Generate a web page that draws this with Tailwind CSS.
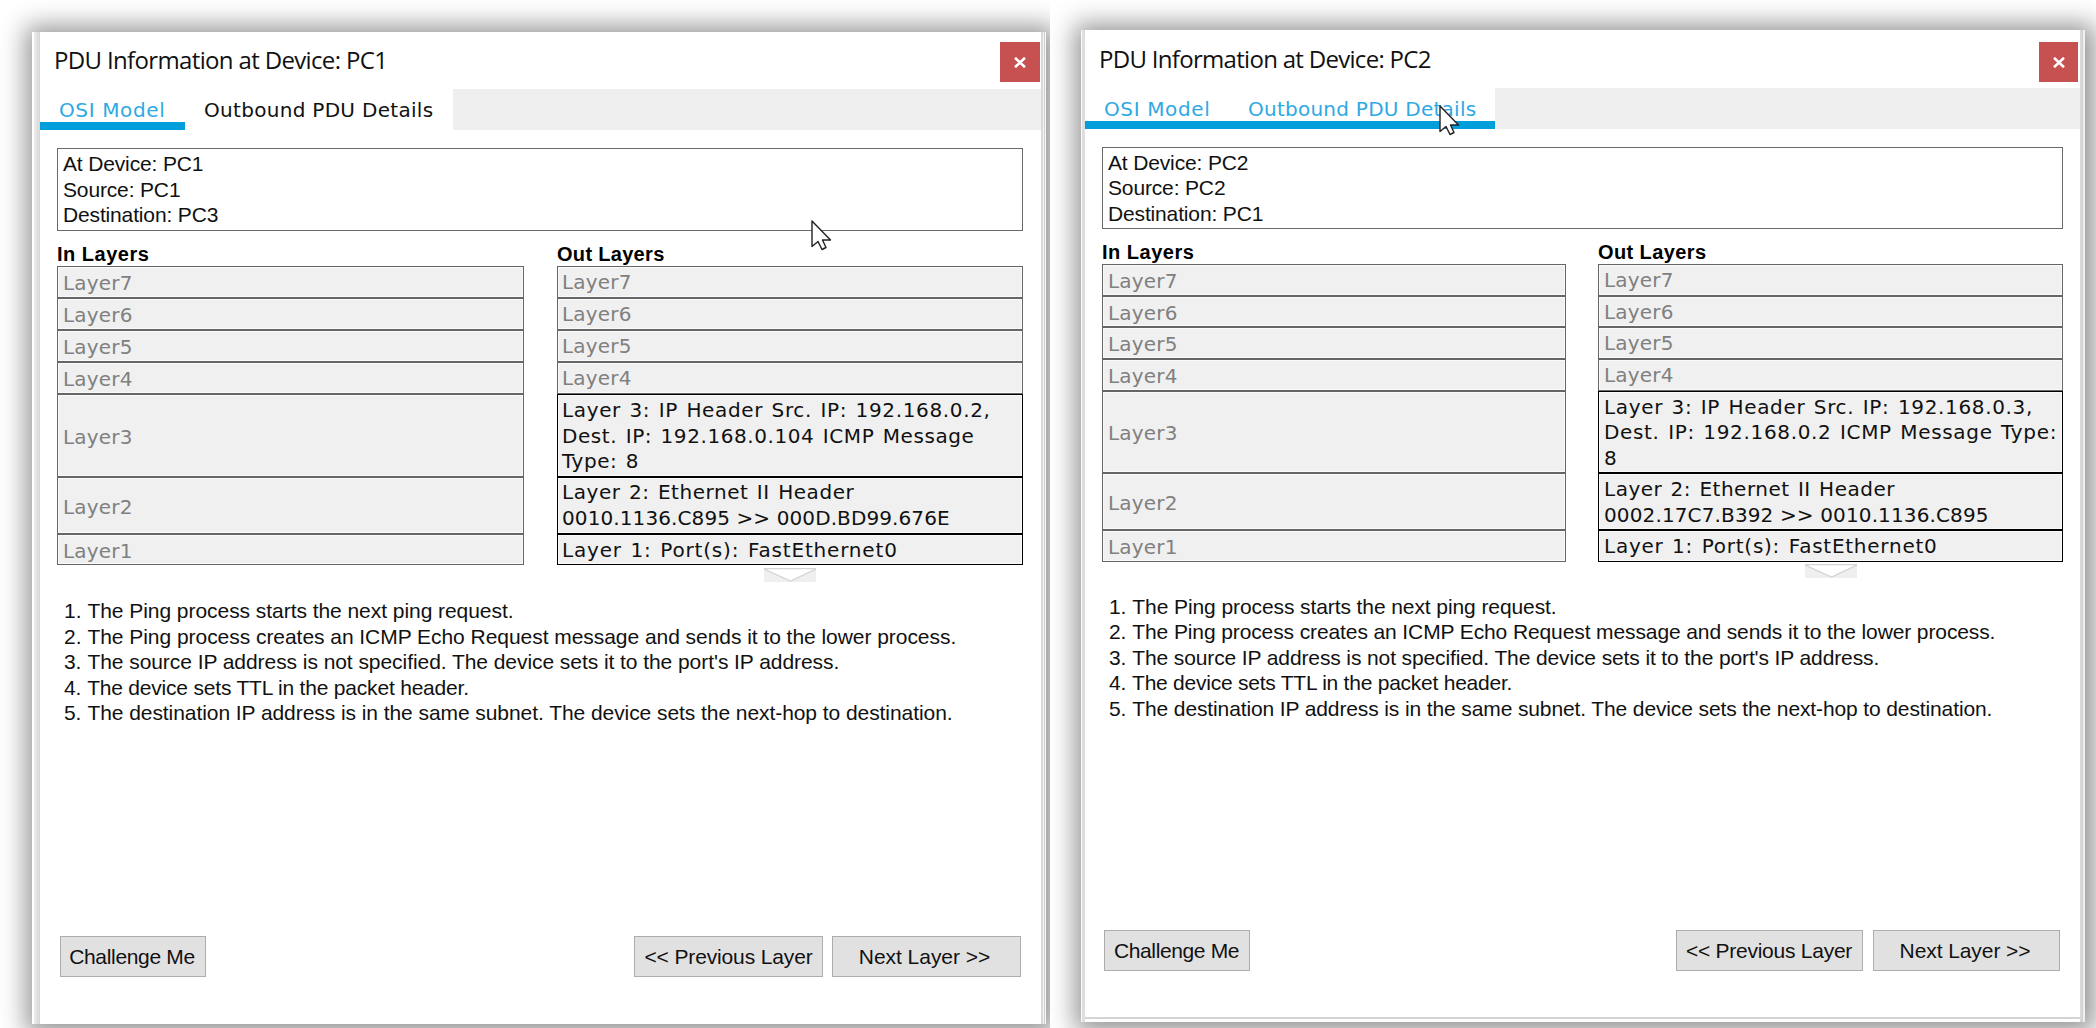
<!DOCTYPE html>
<html lang="en">
<head>
<meta charset="utf-8">
<title>PDU Information</title>
<script src="https://cdn.jsdelivr.net/npm/@tailwindcss/browser@4"></script>
</head>
<body class="flex h-[1028px] w-[2096px] overflow-hidden bg-white font-['Liberation_Sans',Arial,sans-serif] text-[21px] text-[#111]">

<!-- PC1 -->
<section class="relative h-[1028px] w-[1050px] shrink-0 overflow-hidden pt-8 pl-8">
  <div class="flex h-[992px] w-[1014px] border-l-2 border-white bg-white shadow-[2px_2px_24px_8px_rgba(0,0,0,0.42)]">
    <div class="w-[6px] shrink-0 bg-linear-to-r from-[#ececec] to-[#d6d6d6]"></div>
    <div class="flex w-[1001px] shrink-0 flex-col">
      <header class="flex h-[57px] shrink-0 justify-between pl-[14px]">
        <h1 class="font-['Open_Sans',sans-serif] text-[24px] leading-[55px] tracking-[-0.65px] whitespace-nowrap">PDU Information at Device: PC1</h1>
        <button class="mt-[10px] mr-[1px] flex h-[40px] w-[40px] items-center justify-center bg-[#c75050]" aria-label="Close">
          <svg class="h-[11px] w-[12px]" viewBox="0 0 12 11" fill="none" stroke="#fff" stroke-width="2.6"><path d="M1 .8 11 10.2M11 .8 1 10.2"/></svg>
        </button>
      </header>
      <nav class="flex h-[41px] shrink-0 bg-[#efefef] font-['DejaVu_Sans',Verdana,sans-serif] text-[20px] whitespace-nowrap">
        <div class="w-[145px] border-b-8 border-[#009fdb] bg-white pl-[19px] leading-[43px] tracking-[0.63px] text-[#2fa9e3]">OSI Model</div>
        <div class="w-[268px] bg-white pl-[19px] leading-[43px] tracking-[0.3px]">Outbound PDU Details</div>
      </nav>
      <main class="flex grow flex-col px-[17px] pt-[18px]">
        <div class="h-[83px] w-[966px] shrink-0 border border-[#6a6a6a] pt-[2px] pl-[5px] leading-[25.5px] tracking-[-0.15px]">
          <p>At Device: PC1</p><p>Source: PC1</p><p>Destination: PC3</p>
        </div>
        <div class="mt-[11px] flex gap-[33px]">
          <div class="w-[467px]">
            <h2 class="h-[24px] text-[20px] leading-[24px] font-bold tracking-[0.5px] text-black">In Layers</h2>
            <div class="flex flex-col font-['DejaVu_Sans',Verdana,sans-serif] text-[20px] text-[#808080] *:flex *:items-center *:border *:border-[#666] *:bg-[#f0f0f0] *:pt-[2px] *:pl-[5px] *:tracking-[0.2px] *:shadow-[inset_0_0_0_1px_#fafafa]">
              <div class="h-[32px]">Layer7</div>
              <div class="h-[32px]">Layer6</div>
              <div class="h-[32px]">Layer5</div>
              <div class="h-[32px]">Layer4</div>
              <div class="h-[83px]">Layer3</div>
              <div class="h-[57px]">Layer2</div>
              <div class="h-[31px]">Layer1</div>
            </div>
          </div>
          <div class="w-[466px]">
            <h2 class="h-[24px] text-[20px] leading-[24px] font-bold tracking-[0.31px] text-black">Out Layers</h2>
            <div class="flex flex-col font-['DejaVu_Sans',Verdana,sans-serif] text-[20px] leading-[25.4px] whitespace-nowrap *:flex *:flex-col *:justify-center *:border *:bg-[#f0f0f0] *:pl-[4px] *:shadow-[inset_0_0_0_1px_#fafafa]">
              <div class="h-[32px] border-[#666] pt-[2px] tracking-[0.2px] text-[#808080]">Layer7</div>
              <div class="h-[32px] border-[#666] pt-[2px] tracking-[0.2px] text-[#808080]">Layer6</div>
              <div class="h-[32px] border-[#666] pt-[2px] tracking-[0.2px] text-[#808080]">Layer5</div>
              <div class="h-[32px] border-[#666] pt-[2px] tracking-[0.2px] text-[#808080]">Layer4</div>
              <div class="h-[83px] border-black pt-[2px] [word-spacing:1.5px]"><p class="tracking-[0.64px]">Layer 3: IP Header Src. IP: 192.168.0.2,</p><p class="tracking-[0.58px]">Dest. IP: 192.168.0.104 ICMP Message</p><p class="tracking-[0.52px]">Type: 8</p></div>
              <div class="h-[57px] border-black"><p class="tracking-[0.55px] [word-spacing:1.5px]">Layer 2: Ethernet II Header</p><p class="tracking-[0.1px]">0010.1136.C895 &gt;&gt; 000D.BD99.676E</p></div>
              <div class="h-[31px] border-black pt-[2px] tracking-[0.82px] [word-spacing:1.5px]"><p>Layer 1: Port(s): FastEthernet0</p></div>
            </div>
            <svg class="mt-[3px] ml-[207px] block h-[14px] w-[52px]" viewBox="0 0 52 14"><path d="M0 0H52V14H0Z" fill="#efefef"/><path d="M1 1 26.500 13 51 1Z" fill="#fff"/><path d="M0 1 26.500 13 52 1M0 .5H52" fill="none" stroke="#d4d4d4" stroke-width="1.300"/></svg>
          </div>
        </div>
        <ol class="mt-[16px] ml-[7px] leading-[25.5px] whitespace-nowrap *:flex *:gap-[6px]">
          <li class="tracking-[-0.05px]"><span>1.</span><p>The Ping process starts the next ping request.</p></li>
          <li class="tracking-[-0.045px]"><span>2.</span><p>The Ping process creates an ICMP Echo Request message and sends it to the lower process.</p></li>
          <li class="tracking-[-0.06px]"><span>3.</span><p>The source IP address is not specified. The device sets it to the port's IP address.</p></li>
          <li class="tracking-[-0.2px]"><span>4.</span><p>The device sets TTL in the packet header.</p></li>
          <li class="tracking-[-0.065px]"><span>5.</span><p>The destination IP address is in the same subnet. The device sets the next-hop to destination.</p></li>
        </ol>
        <footer class="mt-auto mb-[47px] flex h-[41px] pr-[3px] pl-[3px] whitespace-nowrap *:border-[1.500px] *:border-[#adadad] *:bg-[#e1e1e1] *:leading-[36px]">
          <button class="w-[146px] pr-[2px] tracking-[-0.33px]">Challenge Me</button>
          <button class="mr-[9px] ml-auto w-[189px] tracking-[-0.14px]">&lt;&lt; Previous Layer</button>
          <button class="w-[189px] pr-[4px] tracking-[-0.04px]">Next Layer &gt;&gt;</button>
        </footer>
      </main>
    </div>
    <div class="w-[2px] shrink-0 bg-[#d9d9d9]"></div>
    <div class="w-px shrink-0 bg-[#f4f4f4]"></div>
    <div class="w-px shrink-0 bg-[#cfcfcf]"></div>
    <div class="w-px shrink-0 bg-[#f8f8f8]"></div>
  </div>
  <svg class="absolute top-[220px] left-[811px] h-[31px] w-[21px]" viewBox="0 0 21 31"><path d="M1 1V26.500L7 21.500 11 29.500 15 27.500 11.500 20H19.500Z" fill="#fff" stroke="#222" stroke-width="1.400" stroke-linejoin="round"/></svg>
</section>

<!-- PC2 -->
<section class="relative h-[1028px] w-[1046px] shrink-0 overflow-hidden pt-[30px] pl-[31px]">
  <div class="flex h-[992px] w-[1004px] border-l border-[#fafafa] bg-white shadow-[2px_2px_24px_8px_rgba(0,0,0,0.42)]">
    <div class="w-[3px] shrink-0 bg-[#dedede]"></div>
    <div class="flex h-[989px] w-[995px] shrink-0 flex-col border-b-2 border-[#d4d4d4]">
      <header class="flex h-[58px] shrink-0 justify-between pl-[14px]">
        <h1 class="font-['Open_Sans',sans-serif] text-[24px] leading-[57px] tracking-[-0.7px] whitespace-nowrap">PDU Information at Device: PC2</h1>
        <button class="mt-[12px] mr-[2px] flex h-[40px] w-[39px] items-center justify-center bg-[#c75050]" aria-label="Close">
          <svg class="h-[11px] w-[12px]" viewBox="0 0 12 11" fill="none" stroke="#fff" stroke-width="2.6"><path d="M1 .8 11 10.2M11 .8 1 10.2"/></svg>
        </button>
      </header>
      <nav class="flex h-[41px] shrink-0 bg-[#efefef] font-['DejaVu_Sans',Verdana,sans-serif] text-[20px] whitespace-nowrap text-[#2fa9e3]">
        <div class="w-[144px] border-b-8 border-[#009fdb] bg-white pl-[19px] leading-[43px] tracking-[0.63px]">OSI Model</div>
        <div class="w-[266px] border-b-8 border-[#009fdb] bg-white pl-[19px] leading-[43px] tracking-[0.25px]">Outbound PDU Details</div>
      </nav>
      <main class="flex grow flex-col px-[17px] pt-[18px]">
        <div class="h-[82px] w-[961px] shrink-0 border border-[#6a6a6a] pt-[2px] pl-[5px] leading-[25.3px] tracking-[-0.15px]">
          <p>At Device: PC2</p><p>Source: PC2</p><p>Destination: PC1</p>
        </div>
        <div class="mt-[11px] flex gap-[32px]">
          <div class="w-[464px]">
            <h2 class="h-[24px] text-[20px] leading-[24px] font-bold tracking-[0.5px] text-black">In Layers</h2>
            <div class="flex flex-col font-['DejaVu_Sans',Verdana,sans-serif] text-[20px] text-[#808080] *:flex *:items-center *:border *:border-[#666] *:bg-[#f0f0f0] *:pt-[2px] *:pl-[5px] *:tracking-[0.2px] *:shadow-[inset_0_0_0_1px_#fafafa]">
              <div class="h-[32px]">Layer7</div>
              <div class="h-[31px]">Layer6</div>
              <div class="h-[32px]">Layer5</div>
              <div class="h-[32px]">Layer4</div>
              <div class="h-[82px]">Layer3</div>
              <div class="h-[57px]">Layer2</div>
              <div class="h-[32px]">Layer1</div>
            </div>
          </div>
          <div class="w-[465px]">
            <h2 class="h-[24px] text-[20px] leading-[24px] font-bold tracking-[0.4px] text-black">Out Layers</h2>
            <div class="flex flex-col font-['DejaVu_Sans',Verdana,sans-serif] text-[20px] leading-[25.3px] whitespace-nowrap *:flex *:flex-col *:justify-center *:border *:bg-[#f0f0f0] *:pt-[2px] *:pl-[5px] *:shadow-[inset_0_0_0_1px_#fafafa]">
              <div class="h-[32px] border-[#666] tracking-[0.2px] text-[#808080]">Layer7</div>
              <div class="h-[31px] border-[#666] tracking-[0.2px] text-[#808080]">Layer6</div>
              <div class="h-[32px] border-[#666] tracking-[0.2px] text-[#808080]">Layer5</div>
              <div class="h-[32px] border-[#666] tracking-[0.2px] text-[#808080]">Layer4</div>
              <div class="h-[82px] border-black [word-spacing:1.5px]"><p class="tracking-[0.65px]">Layer 3: IP Header Src. IP: 192.168.0.3,</p><p class="tracking-[0.66px]">Dest. IP: 192.168.0.2 ICMP Message Type:</p><p>8</p></div>
              <div class="h-[57px] border-black"><p class="tracking-[0.5px] [word-spacing:1.5px]">Layer 2: Ethernet II Header</p><p class="tracking-[0.13px]">0002.17C7.B392 &gt;&gt; 0010.1136.C895</p></div>
              <div class="h-[32px] border-black tracking-[0.75px] [word-spacing:1.5px]"><p>Layer 1: Port(s): FastEthernet0</p></div>
            </div>
            <svg class="mt-[2px] ml-[207px] block h-[14px] w-[52px]" viewBox="0 0 52 14"><path d="M0 0H52V14H0Z" fill="#efefef"/><path d="M1 1 26.500 13 51 1Z" fill="#fff"/><path d="M0 1 26.500 13 52 1M0 .5H52" fill="none" stroke="#d4d4d4" stroke-width="1.300"/></svg>
          </div>
        </div>
        <ol class="mt-[16px] ml-[7px] leading-[25.4px] whitespace-nowrap *:flex *:gap-[6px]">
          <li class="tracking-[-0.09px]"><span>1.</span><p>The Ping process starts the next ping request.</p></li>
          <li class="tracking-[-0.11px]"><span>2.</span><p>The Ping process creates an ICMP Echo Request message and sends it to the lower process.</p></li>
          <li class="tracking-[-0.12px]"><span>3.</span><p>The source IP address is not specified. The device sets it to the port's IP address.</p></li>
          <li class="tracking-[-0.24px]"><span>4.</span><p>The device sets TTL in the packet header.</p></li>
          <li class="tracking-[-0.12px]"><span>5.</span><p>The destination IP address is in the same subnet. The device sets the next-hop to destination.</p></li>
        </ol>
        <footer class="mt-auto mb-[46px] flex h-[41px] pr-[3px] pl-[2px] whitespace-nowrap *:border-[1.500px] *:border-[#adadad] *:bg-[#e1e1e1] *:leading-[36px]">
          <button class="w-[146px] pr-[1px] tracking-[-0.37px]">Challenge Me</button>
          <button class="mr-[10px] ml-auto w-[187px] pr-[1px] tracking-[-0.25px]">&lt;&lt; Previous Layer</button>
          <button class="w-[187px] pr-[3px] tracking-[-0.08px]">Next Layer &gt;&gt;</button>
        </footer>
      </main>
    </div>
    <div class="w-[2px] shrink-0 bg-[#d9d9d9]"></div>
    <div class="w-px shrink-0 bg-[#d0d0d0]"></div>
    <div class="w-[2px] shrink-0 bg-[#f0f0f0]"></div>
  </div>
  <svg class="absolute top-[105px] left-[389px] h-[31px] w-[21px]" viewBox="0 0 21 31"><path d="M1 1V26.500L7 21.500 11 29.500 15 27.500 11.500 20H19.500Z" fill="#fff" stroke="#222" stroke-width="1.400" stroke-linejoin="round"/></svg>
</section>
</body>
</html>
